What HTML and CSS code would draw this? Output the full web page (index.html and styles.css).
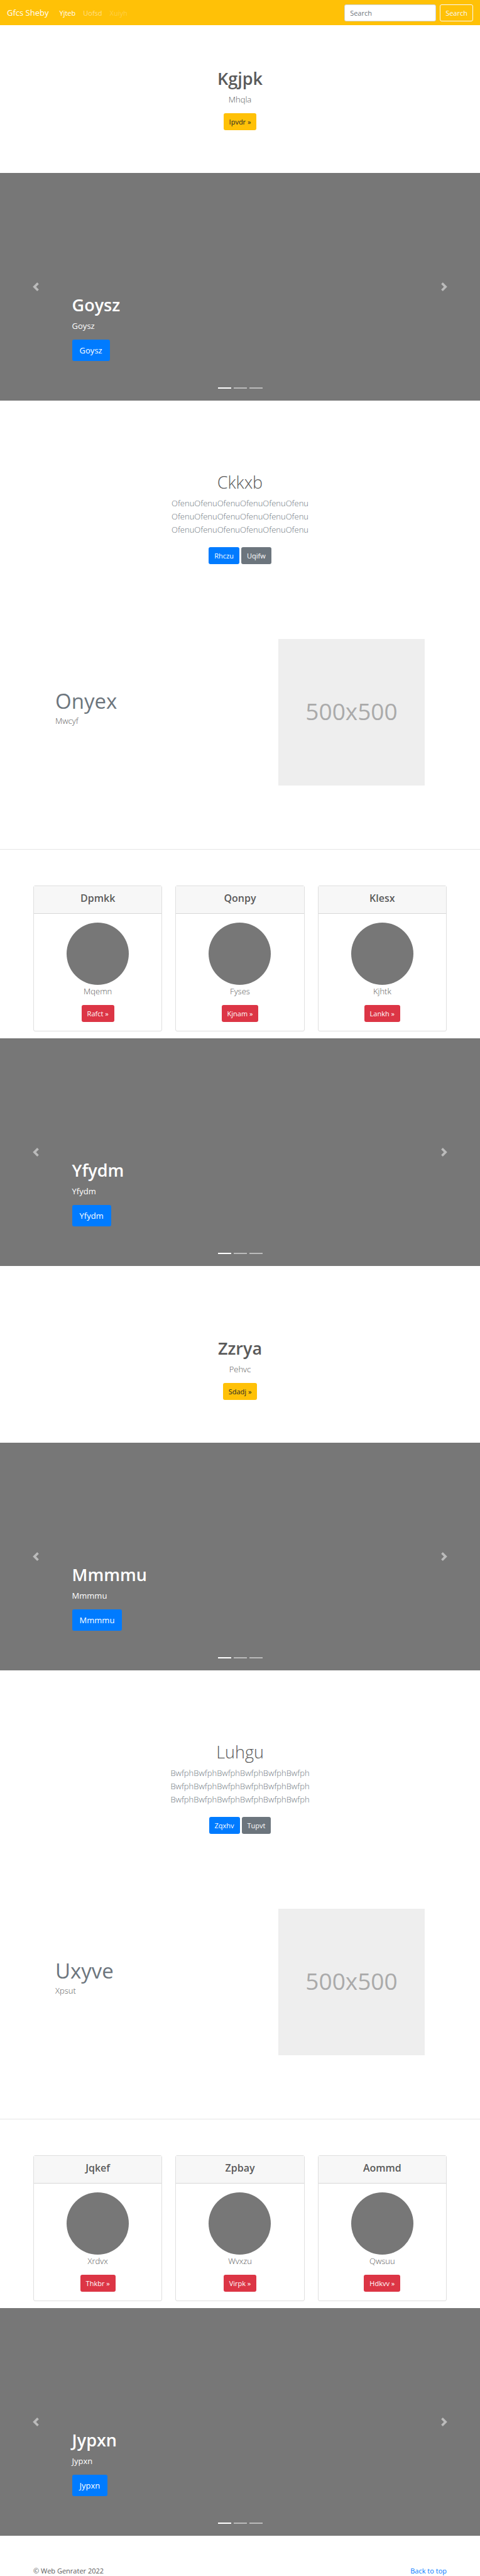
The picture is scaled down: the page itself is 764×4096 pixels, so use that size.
FILE: index.html
```html
<!DOCTYPE html>
<html lang="en">
<head>
<meta charset="utf-8">
<meta name="viewport" content="width=device-width, initial-scale=1">
<title>Gfcs Sheby</title>
<link rel="stylesheet" href="styles.css">
</head>
<body id="top">
<header class="navbar">
  <a class="brand" href="#">Gfcs Sheby</a>
  <nav class="nav">
    <a class="nav-link active" href="#">Yjteb</a>
    <a class="nav-link" href="#">Uofsd</a>
    <a class="nav-link disabled" href="#" aria-disabled="true">Xuiyh</a>
  </nav>
  <form class="search">
    <input class="search-input" type="search" placeholder="Search" aria-label="Search">
    <button class="btn btn-outline" type="submit">Search</button>
  </form>
</header>
<main>
  <section class="cover">
    <h1 class="title">Kgjpk</h1>
    <p class="lead">Mhqla</p>
    <a class="btn btn-warning" href="#">Ipvdr »</a>
  </section>

  <section class="carousel">
    <div class="caption">
      <h2 class="title">Goysz</h2>
      <p class="caption-text">Goysz</p>
      <a class="btn btn-primary btn-lg" href="#">Goysz</a>
    </div>
    <button class="control prev" type="button" aria-label="Previous"><svg class="chevron" viewBox="0 0 8 8"><path d="M5.25 0l-4 4 4 4 1.5-1.5-2.5-2.5 2.5-2.5-1.5-1.5z"/></svg></button>
    <button class="control next" type="button" aria-label="Next"><svg class="chevron" viewBox="0 0 8 8"><path d="M2.75 0l-1.5 1.5 2.5 2.5-2.5 2.5 1.5 1.5 4-4-4-4z"/></svg></button>
    <div class="indicators"><span class="dot on"></span><span class="dot"></span><span class="dot"></span></div>
  </section>

  <section class="album">
    <h2 class="title title-light">Ckkxb</h2>
    <p class="lead muted">OfenuOfenuOfenuOfenuOfenuOfenu<br>OfenuOfenuOfenuOfenuOfenuOfenu<br>OfenuOfenuOfenuOfenuOfenuOfenu</p>
    <div class="actions"><a class="btn btn-primary" href="#">Rhczu</a><a class="btn btn-secondary" href="#">Uqifw</a></div>
  </section>

  <section class="featurette">
    <div class="featurette-body">
      <h2 class="featurette-title">Onyex</h2>
      <p class="lead">Mwcyf</p>
    </div>
    <div class="placeholder">500x500</div>
  </section>
  <hr class="divider">

  <section class="cards">
    <article class="card">
      <h3 class="card-header">Dpmkk</h3>
      <div class="card-body"><div class="avatar"></div><p class="lead">Mqemn</p><a class="btn btn-danger" href="#">Rafct »</a></div>
    </article>
    <article class="card">
      <h3 class="card-header">Qonpy</h3>
      <div class="card-body"><div class="avatar"></div><p class="lead">Fyses</p><a class="btn btn-danger" href="#">Kjnam »</a></div>
    </article>
    <article class="card">
      <h3 class="card-header">Klesx</h3>
      <div class="card-body"><div class="avatar"></div><p class="lead">Kjhtk</p><a class="btn btn-danger" href="#">Lankh »</a></div>
    </article>
  </section>

  <section class="carousel">
    <div class="caption">
      <h2 class="title">Yfydm</h2>
      <p class="caption-text">Yfydm</p>
      <a class="btn btn-primary btn-lg" href="#">Yfydm</a>
    </div>
    <button class="control prev" type="button" aria-label="Previous"><svg class="chevron" viewBox="0 0 8 8"><path d="M5.25 0l-4 4 4 4 1.5-1.5-2.5-2.5 2.5-2.5-1.5-1.5z"/></svg></button>
    <button class="control next" type="button" aria-label="Next"><svg class="chevron" viewBox="0 0 8 8"><path d="M2.75 0l-1.5 1.5 2.5 2.5-2.5 2.5 1.5 1.5 4-4-4-4z"/></svg></button>
    <div class="indicators"><span class="dot on"></span><span class="dot"></span><span class="dot"></span></div>
  </section>

  <section class="cover cover-spaced">
    <h2 class="title">Zzrya</h2>
    <p class="lead">Pehvc</p>
    <a class="btn btn-warning" href="#">Sdadj »</a>
  </section>

  <section class="carousel">
    <div class="caption">
      <h2 class="title">Mmmmu</h2>
      <p class="caption-text">Mmmmu</p>
      <a class="btn btn-primary btn-lg" href="#">Mmmmu</a>
    </div>
    <button class="control prev" type="button" aria-label="Previous"><svg class="chevron" viewBox="0 0 8 8"><path d="M5.25 0l-4 4 4 4 1.5-1.5-2.5-2.5 2.5-2.5-1.5-1.5z"/></svg></button>
    <button class="control next" type="button" aria-label="Next"><svg class="chevron" viewBox="0 0 8 8"><path d="M2.75 0l-1.5 1.5 2.5 2.5-2.5 2.5 1.5 1.5 4-4-4-4z"/></svg></button>
    <div class="indicators"><span class="dot on"></span><span class="dot"></span><span class="dot"></span></div>
  </section>

  <section class="album">
    <h2 class="title title-light">Luhgu</h2>
    <p class="lead muted">BwfphBwfphBwfphBwfphBwfphBwfph<br>BwfphBwfphBwfphBwfphBwfphBwfph<br>BwfphBwfphBwfphBwfphBwfphBwfph</p>
    <div class="actions"><a class="btn btn-primary" href="#">Zqxhv</a><a class="btn btn-secondary" href="#">Tupvt</a></div>
  </section>

  <section class="featurette">
    <div class="featurette-body">
      <h2 class="featurette-title">Uxyve</h2>
      <p class="lead">Xpsut</p>
    </div>
    <div class="placeholder">500x500</div>
  </section>
  <hr class="divider">

  <section class="cards">
    <article class="card">
      <h3 class="card-header">Jqkef</h3>
      <div class="card-body"><div class="avatar"></div><p class="lead">Xrdvx</p><a class="btn btn-danger" href="#">Thkbr »</a></div>
    </article>
    <article class="card">
      <h3 class="card-header">Zpbay</h3>
      <div class="card-body"><div class="avatar"></div><p class="lead">Wvxzu</p><a class="btn btn-danger" href="#">Virpk »</a></div>
    </article>
    <article class="card">
      <h3 class="card-header">Aommd</h3>
      <div class="card-body"><div class="avatar"></div><p class="lead">Qwsuu</p><a class="btn btn-danger" href="#">Hdkvv »</a></div>
    </article>
  </section>

  <section class="carousel">
    <div class="caption">
      <h2 class="title">Jypxn</h2>
      <p class="caption-text">Jypxn</p>
      <a class="btn btn-primary btn-lg" href="#">Jypxn</a>
    </div>
    <button class="control prev" type="button" aria-label="Previous"><svg class="chevron" viewBox="0 0 8 8"><path d="M5.25 0l-4 4 4 4 1.5-1.5-2.5-2.5 2.5-2.5-1.5-1.5z"/></svg></button>
    <button class="control next" type="button" aria-label="Next"><svg class="chevron" viewBox="0 0 8 8"><path d="M2.75 0l-1.5 1.5 2.5 2.5-2.5 2.5 1.5 1.5 4-4-4-4z"/></svg></button>
    <div class="indicators"><span class="dot on"></span><span class="dot"></span><span class="dot"></span></div>
  </section>
</main>
<footer class="footer">
  <span>© Web Genrater 2022</span>
  <a class="footer-link" href="#top">Back to top</a>
</footer>
</body>
</html>
```
FILE: styles.css
```css
* { box-sizing: border-box; }

body {
  margin: 0;
  background: #fff;
  color: #5a5a5a;
  font-family: "Open Sans", "Noto Sans", sans-serif;
  font-size: 11px;
  line-height: 17px;
}

h1, h2, h3, p { margin: 0; }
a { text-decoration: none; }

.navbar {
  display: flex;
  align-items: center;
  height: 40px;
  padding: 0 11px;
  background: #ffc107;
}

.brand {
  margin-right: 11px;
  color: #fff;
  font-size: 13px;
  line-height: 21px;
}

.nav { display: flex; flex: 1; }

.nav-link {
  padding: 6px;
  color: rgba(255, 255, 255, 0.5);
}
.nav-link.active { color: #fff; }
.nav-link.disabled { color: rgba(255, 255, 255, 0.25); }

.search { display: flex; gap: 6px; }

.search-input {
  width: 146px;
  height: 27px;
  padding: 4px 8px;
  border: 1px solid #ced4da;
  border-radius: 3px;
  background: #fff;
  color: #495057;
  font: inherit;
}
.search-input::placeholder { color: #6c757d; opacity: 1; }

.btn {
  display: inline-block;
  height: 27px;
  padding: 4px 8px;
  border: 1px solid transparent;
  border-radius: 3px;
  background: transparent;
  color: #fff;
  font: inherit;
  line-height: 17px;
  text-align: center;
}
.btn-outline { border-color: #f8f9fa; color: #f8f9fa; }
.btn-warning { background: #ffc107; color: #212529; }
.btn-primary { background: #007bff; }
.btn-secondary { background: #6c757d; }
.btn-danger { background: #dc3545; }

.btn-lg {
  height: 34px;
  padding: 5px 11px;
  font-size: 13px;
  line-height: 22px;
}

.title {
  margin-bottom: 6px;
  font-size: 27px;
  font-weight: 600;
  line-height: 34px;
}
.title-light { font-weight: 300; }

.lead {
  margin-bottom: 11px;
  font-size: 13px;
  font-weight: 300;
  line-height: 21px;
}
.muted { color: #6c757d; }

.cover {
  display: flex;
  flex-direction: column;
  align-items: center;
  padding: 68px 11px;
  text-align: center;
}
.cover-spaced { padding-top: 114px; }

.carousel {
  position: relative;
  display: flex;
  flex-direction: column;
  justify-content: flex-end;
  height: 362px;
  padding: 0 15% 63px;
  background: #777;
  color: #fff;
}

.caption-text {
  margin-bottom: 11px;
  font-size: 13px;
  line-height: 21px;
}
.caption .btn { display: block; width: fit-content; }

.control {
  position: absolute;
  top: 0;
  bottom: 0;
  display: flex;
  align-items: center;
  justify-content: center;
  width: 15%;
  padding: 0;
  border: 0;
  background: transparent;
  opacity: 0.5;
}
.prev { left: 0; }
.next { right: 0; }
.chevron { width: 14px; height: 14px; fill: #fff; }

.indicators {
  position: absolute;
  right: 0;
  bottom: 19px;
  left: 0;
  display: flex;
  justify-content: center;
  gap: 4px;
}
.dot { width: 21px; height: 2px; background: #fff; opacity: 0.5; }
.dot.on { opacity: 1; }

.album {
  padding: 113px 11px 119px;
  text-align: center;
}
.album .lead { margin-bottom: 17px; }
.actions { display: flex; justify-content: center; gap: 3px; }

.featurette {
  display: flex;
  padding: 0 88px;
}
.featurette-body { flex: 1; padding-top: 78px; }
.featurette-title {
  color: #6c757d;
  font-size: 33px;
  font-weight: 400;
  line-height: 42px;
}

.placeholder {
  display: flex;
  flex: 0 0 233px;
  align-items: center;
  justify-content: center;
  height: 233px;
  padding-bottom: 4px;
  background: #eee;
  color: #aaa;
  font-size: 37px;
}

.divider {
  margin: 101px 0 57px;
  border: 0;
  border-top: 1px solid #e5e5e5;
}

.cards {
  display: grid;
  grid-template-columns: repeat(3, 1fr);
  gap: 21px;
  padding: 0 53px 11px;
}
.card {
  border: 1px solid #dfdfdf;
  border-radius: 3px;
  text-align: center;
}
.card-header {
  padding: 9px 14px 14px;
  border-bottom: 1px solid #d8d8d8;
  background: #f7f7f7;
  font-size: 16px;
  font-weight: 600;
  line-height: 20px;
}
.card-body {
  display: flex;
  flex-direction: column;
  align-items: center;
  padding: 14px;
}
.avatar {
  width: 99px;
  height: 99px;
  border-radius: 50%;
  background: #777;
}

.footer {
  display: flex;
  justify-content: space-between;
  padding: 47px 53px 0;
}
.footer-link { color: #007bff; }
```
